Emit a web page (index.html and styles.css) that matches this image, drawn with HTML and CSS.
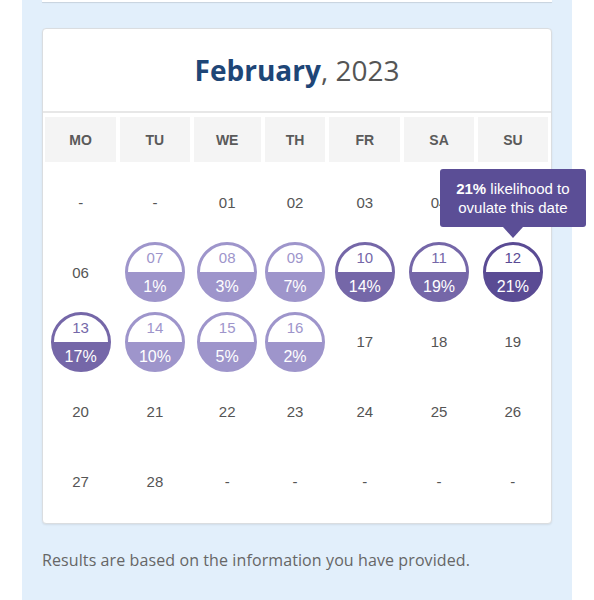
FILE: index.html
```html
<!DOCTYPE html>
<html>
<head>
<meta charset="utf-8">
<link rel="stylesheet" href="styles.css">
</head>
<body>
<div class="panel">
  <div class="prev-card"></div>
  <section class="card">
    <h2 class="title"><strong>February</strong>, 2023</h2>
    <div class="week-head">
      <div class="wd">MO</div><div class="wd">TU</div><div class="wd">WE</div><div class="wd">TH</div><div class="wd">FR</div><div class="wd">SA</div><div class="wd">SU</div>
    </div>
    <div class="days">
      <div class="day">-</div><div class="day">-</div><div class="day">01</div><div class="day">02</div><div class="day">03</div><div class="day">04</div><div class="day">05</div>

      <div class="day">06</div>
      <div class="day"><div class="circ light"><span class="n">07</span><span class="p">1%</span></div></div>
      <div class="day"><div class="circ light"><span class="n">08</span><span class="p">3%</span></div></div>
      <div class="day"><div class="circ light"><span class="n">09</span><span class="p">7%</span></div></div>
      <div class="day"><div class="circ mid"><span class="n">10</span><span class="p">14%</span></div></div>
      <div class="day"><div class="circ mid"><span class="n">11</span><span class="p">19%</span></div></div>
      <div class="day"><div class="circ dark"><span class="n">12</span><span class="p">21%</span>
        <div class="tip"><b>21%</b> likelihood to ovulate this date</div></div></div>

      <div class="day"><div class="circ mid"><span class="n">13</span><span class="p">17%</span></div></div>
      <div class="day"><div class="circ light"><span class="n">14</span><span class="p">10%</span></div></div>
      <div class="day"><div class="circ light"><span class="n">15</span><span class="p">5%</span></div></div>
      <div class="day"><div class="circ light"><span class="n">16</span><span class="p">2%</span></div></div>
      <div class="day">17</div><div class="day">18</div><div class="day">19</div>

      <div class="day">20</div><div class="day">21</div><div class="day">22</div><div class="day">23</div><div class="day">24</div><div class="day">25</div><div class="day">26</div>

      <div class="day">27</div><div class="day">28</div><div class="day">-</div><div class="day">-</div><div class="day">-</div><div class="day">-</div><div class="day">-</div>
    </div>
  </section>
  <p class="note">Results are based on the information you have provided.</p>
</div>
</body>
</html>
```
FILE: styles.css
```css
* { box-sizing: border-box; }
html, body { margin: 0; padding: 0; background: #fff; }
body { font-family: "Liberation Sans", Arial, sans-serif; }

.panel {
  margin: 0 22px;
  background: #e2effb;
  padding: 0 20px 60px;
  min-height: 600px;
}

.prev-card {
  height: 2px;
  background: #fff;
  box-shadow: 0 1px 1px rgba(0,0,0,0.12);
  margin-bottom: 26px;
}

.card {
  background: #fff;
  border: 1px solid #dadde0;
  border-radius: 4px;
  box-shadow: 0 1px 2px rgba(0,0,0,0.08);
}

.title {
  margin: 0;
  height: 84px;
  display: flex;
  align-items: center;
  justify-content: center;
  font-family: "Open Sans", sans-serif;
  font-size: 28px;
  font-weight: 400;
  color: #555;
  border-bottom: 2px solid #e7e7e7;
}
.title strong { color: #1e4677; font-weight: 700; }

.week-head, .days {
  display: grid;
  grid-template-columns: 72fr 70fr 68fr 61fr 72fr 70fr 71fr;
  column-gap: 4px;
  padding: 0 3px 0 2px;
}
.week-head { margin-top: 4px; }
.wd {
  height: 45px;
  background: #f4f4f4;
  display: flex;
  align-items: center;
  justify-content: center;
  font-weight: 700;
  font-size: 14px;
  color: #5a5a5a;
}

.days {
  margin-top: 6px;
  padding-bottom: 7px;
  grid-auto-rows: 69.6px;
}
.day {
  display: flex;
  align-items: center;
  justify-content: center;
  font-size: 15px;
  color: #555;
}

.circ {
  position: relative;
  width: 60px;
  height: 60px;
  border-radius: 50%;
  border: 3px solid var(--c);
  background: linear-gradient(to bottom, #fff 50%, var(--c) 50%);
  display: flex;
  flex-direction: column;
}
.circ .n, .circ .p {
  flex: 1;
  display: flex;
  align-items: center;
  justify-content: center;
}
.circ .n { color: var(--c); font-size: 15px; padding-bottom: 2px; }
.circ .p { color: #fff; font-size: 16px; padding-top: 3px; }
.light { --c: #9e95cb; }
.mid { --c: #7567a8; }
.dark { --c: #5a4b94; }

.tip {
  position: absolute;
  bottom: calc(100% + 18px);
  left: 50%;
  transform: translateX(-50%);
  width: 146px;
  padding: 10px 8px;
  background: #5b4e96;
  color: #fff;
  border-radius: 3px;
  font-size: 15px;
  line-height: 19px;
  text-align: center;
  z-index: 2;
}
.tip::after {
  content: "";
  position: absolute;
  left: 50%;
  top: 100%;
  margin-left: -10px;
  border-left: 10px solid transparent;
  border-right: 10px solid transparent;
  border-top: 11px solid #5b4e96;
}

.note {
  margin: 26px 0 0;
  font-family: "Open Sans", sans-serif;
  font-size: 16px;
  letter-spacing: 0.1px;
  line-height: 20px;
  color: #666;
}
```
